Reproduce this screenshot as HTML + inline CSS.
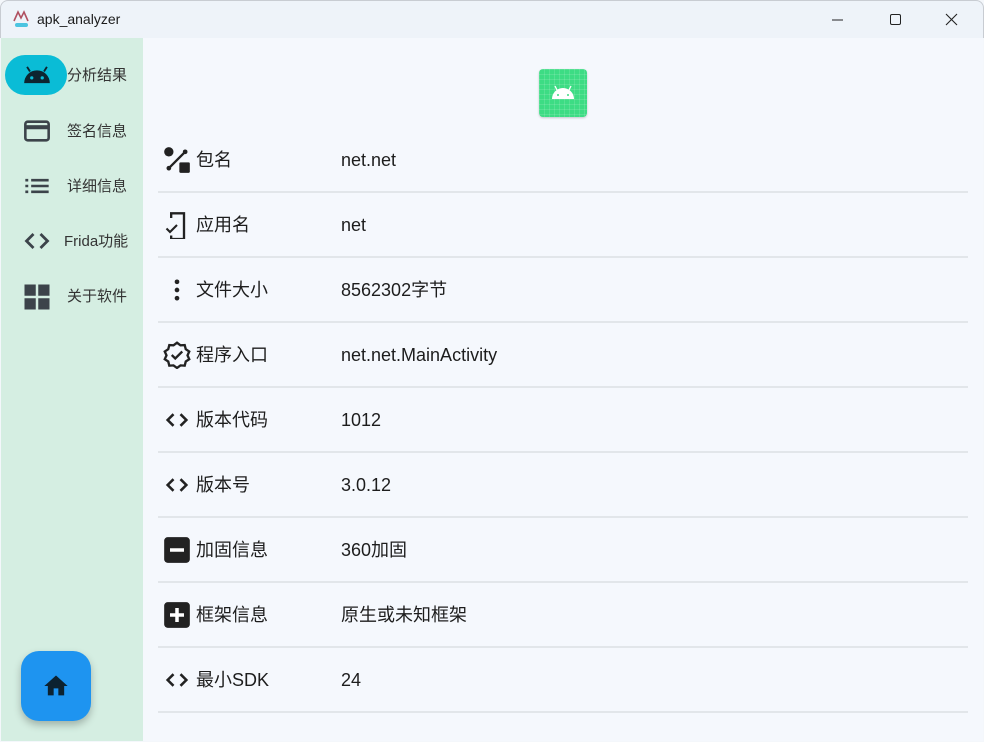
<!DOCTYPE html>
<html><head><meta charset="utf-8"><style>
*{margin:0;padding:0;box-sizing:border-box}
body{width:984px;height:742px;overflow:hidden;background:#f4f7fb;font-family:"Liberation Sans","Noto Sans CJK SC",sans-serif;position:relative}
.title{position:absolute;left:0;top:0;width:984px;height:38px;background:#eef3f9;border:1px solid #c8ccd2;border-bottom:none;border-radius:8px 8px 0 0}
.title span{position:absolute;left:36px;top:10px;font-size:14px;color:#1b1b1b}
.side{position:absolute;left:1px;top:38px;width:142px;height:703px;background:#d5eee2}
.main{position:absolute;left:143px;top:38px;width:840px;height:703px;background:#f5f8fd}
.nav{position:absolute;left:0;width:142px;height:40px}
.nav svg{position:absolute;left:21px;top:6px}
.nav span{position:absolute;left:66px;top:11px;font-size:15px;line-height:20px;color:#333}
.row{position:absolute;left:158px;width:810px;height:65px;border-bottom:2px solid #e2e6ea}
.row svg{position:absolute;left:5px;top:18px}
.row .l,.row .v{position:absolute;top:20px;font-size:18px;line-height:24px;color:#1d1d1d}
.row .l{left:38px}
.row .v{left:183px}
</style></head><body>
<div class="title">
<svg style="position:absolute;left:11px;top:8px" width="20" height="20" viewBox="0 0 20 20"><path d="M2 12 L6 3 L9 9 L12 3 L16 12" stroke="#b05060" stroke-width="1.6" fill="none"/><rect x="3" y="14" width="13" height="4" rx="2" fill="#4cc4e0"/></svg>
<span>apk_analyzer</span>
<svg style="position:absolute;left:828px;top:12px" width="140" height="14"><path d="M3 7h11" stroke="#222" stroke-width="1"/><rect x="61.5" y="1.5" width="10" height="10" rx="1.5" stroke="#222" fill="none"/><path d="M117 1l11 11M128 1l-11 11" stroke="#222" stroke-width="1.1"/></svg>
</div>
<div class="side">
<div style="position:absolute;left:4px;top:17px;width:62px;height:40px;border-radius:20px;background:#0abcd6"></div>
<div class="nav" style="top:17px"><svg width="30" height="28" viewBox="0 0 24 24"><path d="M1 19a11 11 0 0 1 22 0z" fill="#0d2530"/><path d="M6 9l-2.5-4M18 9l2.5-4" stroke="#0d2530" stroke-width="1.6"/><circle cx="7.5" cy="14.5" r="1.4" fill="#0abcd6"/><circle cx="16.5" cy="14.5" r="1.4" fill="#0abcd6"/></svg><span>分析结果</span></div>
<div class="nav" style="top:73px"><svg width="30" height="28" viewBox="0 0 24 24"><rect x="2" y="4" width="20" height="16" rx="2" fill="none" stroke="#3c434a" stroke-width="2.2"/><rect x="2" y="7" width="20" height="3.5" fill="#3c434a"/></svg><span>签名信息</span></div>
<div class="nav" style="top:128px"><svg width="30" height="28" viewBox="0 0 24 24"><path d="M2 7h2.5M2 12h2.5M2 17h2.5M7 7h15M7 12h15M7 17h15" stroke="#3c434a" stroke-width="2.2"/></svg><span>详细信息</span></div>
<div class="nav" style="top:183px"><svg width="30" height="28" viewBox="0 0 24 24"><path d="M9 6l-6 6 6 6M15 6l6 6-6 6" stroke="#3c434a" stroke-width="2.4" fill="none"/></svg><span style="left:63px">Frida功能</span></div>
<div class="nav" style="top:238px"><svg width="30" height="30" viewBox="0 0 24 24"><rect x="2" y="2" width="9" height="9" fill="#3c434a"/><rect x="13" y="2" width="9" height="9" fill="#3c434a"/><rect x="2" y="13" width="9" height="9" fill="#3c434a"/><rect x="13" y="13" width="9" height="9" fill="#3c434a"/></svg><span>关于软件</span></div>
<div style="position:absolute;left:20px;top:613px;width:70px;height:70px;border-radius:18px;background:#1e94f0;box-shadow:0 4px 8px rgba(0,0,0,.25)"><svg style="position:absolute;left:21px;top:21px" width="28" height="28" viewBox="0 0 24 24"><path d="M10 20v-6h4v6h5v-8h3L12 3 2 12h3v8z" fill="#0c2230"/></svg></div>
</div>
<div class="main">
<div style="position:absolute;left:396px;top:31px;width:48px;height:48px;border-radius:4px;background:#3ddc84;box-shadow:0 1px 2px rgba(0,0,0,.2);background-image:linear-gradient(rgba(255,255,255,.12) 1px,transparent 1px),linear-gradient(90deg,rgba(255,255,255,.12) 1px,transparent 1px);background-size:5px 5px"><svg style="position:absolute;left:10px;top:12px" width="28" height="20" viewBox="0 0 28 20"><path d="M3 18a11 11 0 0 1 22 0z" fill="#fff"/><path d="M8 9l-2-4M20 9l2-4" stroke="#fff" stroke-width="1.3"/><circle cx="9" cy="14" r="1" fill="#3ddc84"/><circle cx="19" cy="14" r="1" fill="#3ddc84"/></svg></div>
</div>
<div class="row" style="top:128px"><svg width="28" height="28" viewBox="0 0 24 24"><circle cx="5" cy="5" r="4" fill="#222"/><circle cx="5" cy="19" r="2" fill="#222"/><circle cx="19" cy="5" r="2" fill="#222"/><rect x="14" y="14" width="9" height="9" rx="1" fill="#222"/><path d="M5 19L19 5" stroke="#222" stroke-width="2"/></svg><span class="l">包名</span><span class="v">net.net</span></div>
<div class="row" style="top:193px"><svg width="28" height="28" viewBox="0 0 24 24"><path d="M7 6V2h11v22H7v-3" stroke="#222" stroke-width="2" fill="none"/><path d="M3 15l3 3 6-6" stroke="#222" stroke-width="1.8" fill="none"/></svg><span class="l">应用名</span><span class="v">net</span></div>
<div class="row" style="top:258px"><svg width="28" height="28" viewBox="0 0 24 24"><circle cx="12" cy="5" r="2" fill="#222"/><circle cx="12" cy="12" r="2" fill="#222"/><circle cx="12" cy="19" r="2" fill="#222"/></svg><span class="l">文件大小</span><span class="v">8562302字节</span></div>
<div class="row" style="top:323px"><svg width="28" height="28" viewBox="0 0 24 24"><path d="M12 1.5l3 2.2 3.6-.2.9 3.5 3 2-1.5 3.3 1.5 3.3-3 2-.9 3.5-3.6-.2-3 2.2-3-2.2-3.6.2-.9-3.5-3-2L3 12.3 1.5 9l3-2 .9-3.5 3.6.2z" stroke="#222" stroke-width="2" fill="none"/><path d="M7.5 12l3 3 6-6" stroke="#222" stroke-width="2" fill="none"/></svg><span class="l">程序入口</span><span class="v">net.net.MainActivity</span></div>
<div class="row" style="top:388px"><svg width="28" height="28" viewBox="0 0 24 24"><path d="M9 7l-5 5 5 5M15 7l5 5-5 5" stroke="#222" stroke-width="2.2" fill="none"/></svg><span class="l">版本代码</span><span class="v">1012</span></div>
<div class="row" style="top:453px"><svg width="28" height="28" viewBox="0 0 24 24"><path d="M9 7l-5 5 5 5M15 7l5 5-5 5" stroke="#222" stroke-width="2.2" fill="none"/></svg><span class="l">版本号</span><span class="v">3.0.12</span></div>
<div class="row" style="top:518px"><svg width="28" height="28" viewBox="0 0 24 24"><rect x="1" y="1" width="22" height="22" rx="3" fill="#222"/><rect x="6" y="10.5" width="12" height="3" fill="#fff"/></svg><span class="l">加固信息</span><span class="v">360加固</span></div>
<div class="row" style="top:583px"><svg width="28" height="28" viewBox="0 0 24 24"><rect x="1" y="1" width="22" height="22" rx="3" fill="#222"/><path d="M6 12h12M12 6v12" stroke="#fff" stroke-width="3"/></svg><span class="l">框架信息</span><span class="v">原生或未知框架</span></div>
<div class="row" style="top:648px"><svg width="28" height="28" viewBox="0 0 24 24"><path d="M9 7l-5 5 5 5M15 7l5 5-5 5" stroke="#222" stroke-width="2.2" fill="none"/></svg><span class="l">最小SDK</span><span class="v">24</span></div>
</body></html>
